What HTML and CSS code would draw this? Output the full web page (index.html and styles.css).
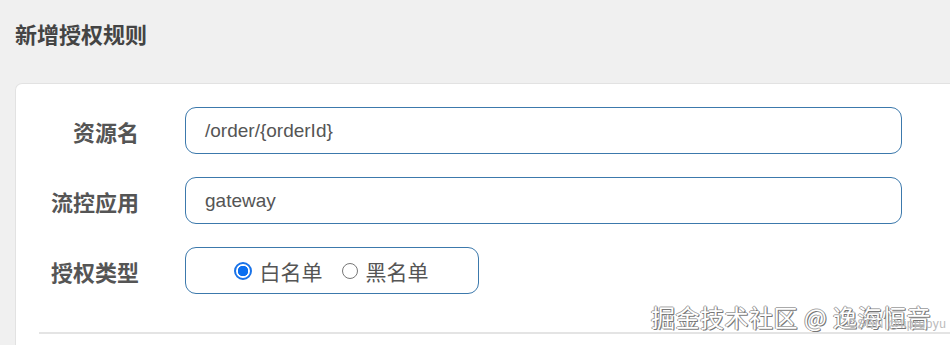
FILE: index.html
```html
<!DOCTYPE html>
<html lang="zh">
<head>
<meta charset="utf-8">
<link rel="stylesheet" href="styles.css">
</head>
<body>
<h1 class="title">新增授权规则</h1>
<div class="card">
  <div class="row">
    <label class="label">资源名</label>
    <div class="field">/order/{orderId}</div>
  </div>
  <div class="row">
    <label class="label">流控应用</label>
    <div class="field">gateway</div>
  </div>
  <div class="row">
    <label class="label">授权类型</label>
    <div class="field radios">
      <span class="opt"><span class="dot on"></span>白名单</span>
      <span class="opt"><span class="dot"></span>黑名单</span>
    </div>
  </div>
  <div class="divider"></div>
</div>
<div class="wm">掘金技术社区 @ 逸海恒音</div>
<div class="wm2">CSDN @lipruoyu</div>
</body>
</html>
```
FILE: styles.css
```css
html, body {
  margin: 0;
  padding: 0;
  background: #f0f0f0;
  overflow: hidden;
  font-family: "Liberation Sans", "Noto Sans CJK SC", sans-serif;
}
.title {
  margin: 0;
  padding: 18px 0 0 15px;
  height: 83px;
  box-sizing: border-box;
  font-family: "Noto Sans CJK SC", sans-serif;
  font-size: 22px;
  line-height: 30px;
  font-weight: 700;
  color: #444;
}
.card {
  margin-left: 15px;
  width: 960px;
  height: 262px;
  background: #fff;
  border: 1px solid #e2e2e2;
  border-bottom: 0;
  border-radius: 7px 7px 0 0;
  padding-top: 23px;
  box-sizing: border-box;
}
.row {
  display: flex;
  align-items: center;
  gap: 46px;
  margin-bottom: 23px;
}
.label {
  width: 123px;
  text-align: right;
  font-family: "Noto Sans CJK SC", sans-serif;
  font-size: 22px;
  font-weight: 700;
  color: #555;
}
.field {
  width: 717px;
  height: 47px;
  box-sizing: border-box;
  border: 1px solid #3c79ac;
  border-radius: 11px;
  padding-left: 19px;
  display: flex;
  align-items: center;
  font-size: 19px;
  color: #555;
}
.radios {
  width: 294px;
  padding: 0 2px 0 0;
  justify-content: center;
  gap: 19px;
  font-family: "Noto Sans CJK SC", sans-serif;
  font-size: 21px;
}
.opt {
  display: flex;
  align-items: center;
  gap: 8px;
  color: #555;
}
.dot {
  width: 16px;
  height: 16px;
  box-sizing: border-box;
  border: 1.5px solid #777;
  border-radius: 50%;
}
.dot.on {
  width: 18px;
  height: 18px;
  border: 2px solid #1a73e8;
  background: radial-gradient(circle, #0b6ff0 0 5px, #fff 5.5px);
}
.divider {
  margin: 38px 0 0 23px;
  height: 2px;
  background: #e4e4e4;
}
.wm {
  position: absolute;
  left: 651px;
  top: 300px;
  font-family: "Noto Sans CJK SC", sans-serif;
  font-size: 24px;
  line-height: 34px;
  color: #fff;
  text-shadow: 1px 1px 0 #777, -1px 0 0 #999, 0 -1px 0 #aaa, 1px 0 0 #888;
  letter-spacing: 0.5px;
}
.wm2 {
  position: absolute;
  left: 848px;
  top: 317px;
  font-size: 12px;
  color: #bbb;
  letter-spacing: 0.5px;
}
```
